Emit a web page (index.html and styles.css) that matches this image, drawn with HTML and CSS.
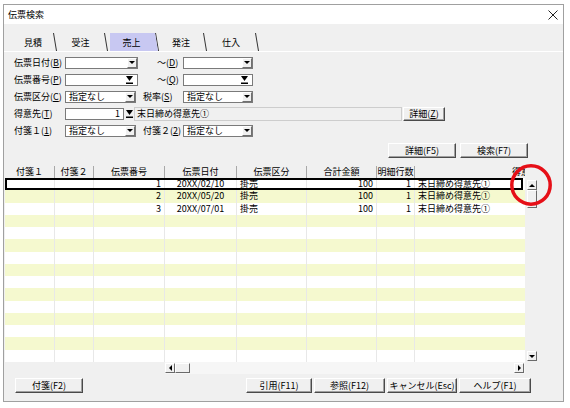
FILE: index.html
```html
<!DOCTYPE html>
<html lang="ja">
<head>
    <meta charset="UTF-8">
    <title>伝票検索</title>
    <link rel="stylesheet" href="styles.css">
</head>
<body>

<div class="window">
    <div class="titlebar">
        <span>伝票検索</span>
        <svg class="close" viewBox="0 0 10 10"><path d="M0.5 0.5L9.5 9.5M9.5 0.5L0.5 9.5" stroke="#222" stroke-width="1"/></svg>
    </div>

    <!-- tab strip -->
    <div class="tabbar">
        <div class="tab w40">見積</div>
        <svg class="sep" viewBox="0 0 4 18"><line x1="0.5" y1="0" x2="3.5" y2="18"/></svg>
        <div class="tab w47">受注</div>
        <svg class="sep" viewBox="0 0 4 18"><line x1="0.5" y1="0" x2="3.5" y2="18"/></svg>
        <div class="tab tab-sel w49">売上</div>
        <svg class="sep sep-over" viewBox="0 0 4 18"><line x1="0.5" y1="0" x2="3.5" y2="18"/></svg>
        <div class="tab w44">発注</div>
        <svg class="sep" viewBox="0 0 4 18"><line x1="0.5" y1="0" x2="3.5" y2="18"/></svg>
        <div class="tab w48">仕入</div>
        <svg class="sep" viewBox="0 0 4 18"><line x1="0.5" y1="0" x2="3.5" y2="18"/></svg>
    </div>

    <div class="panel">
        <div class="form">
            <div class="frow">
                <span class="lbl">伝票日付(<u>B</u>)</span>
                <div class="combo w73"><span></span><i class="drop"></i></div>
                <span class="lbl lbl-to">～(<u>D</u>)</span>
                <div class="combo w70"><span></span><i class="drop"></i></div>
            </div>
            <div class="frow">
                <span class="lbl">伝票番号(<u>P</u>)</span>
                <div class="lookup w73">
                    <svg class="pick" viewBox="0 0 7 8"><polygon points="0,0 7,0 3.5,5"/><rect x="0" y="6.5" width="7" height="1.5"/></svg>
                </div>
                <span class="lbl lbl-to">～(<u>Q</u>)</span>
                <div class="lookup w70">
                    <svg class="pick" viewBox="0 0 7 8"><polygon points="0,0 7,0 3.5,5"/><rect x="0" y="6.5" width="7" height="1.5"/></svg>
                </div>
            </div>
            <div class="frow">
                <span class="lbl">伝票区分(<u>C</u>)</span>
                <div class="combo w71"><span>指定なし</span><i class="drop"></i></div>
                <span class="lbl lbl-mid">税率(<u>S</u>)</span>
                <div class="combo w70"><span>指定なし</span><i class="drop"></i></div>
            </div>
            <div class="frow">
                <span class="lbl">得意先(<u>T</u>)</span>
                <div class="input w59">1</div>
                <svg class="pick pick-out" viewBox="0 0 7 8"><polygon points="0,0 7,0 3.5,5"/><rect x="0" y="6.5" width="7" height="1.5"/></svg>
                <div class="namefield">末日締め得意先①</div>
                <button class="btn btn-z">詳細(<u>Z</u>)</button>
            </div>
            <div class="frow">
                <span class="lbl">付箋１(<u>1</u>)</span>
                <div class="combo w71"><span>指定なし</span><i class="drop"></i></div>
                <span class="lbl lbl-mid">付箋２(<u>2</u>)</span>
                <div class="combo w70"><span>指定なし</span><i class="drop"></i></div>
            </div>
        </div>

        <div class="actions">
            <button class="btn w68">詳細(F5)</button>
            <button class="btn w68">検索(F7)</button>
        </div>

        <!-- result list -->
        <div class="grid">
            <div class="grid-main">
                <div class="ghead">
                    <div>付箋１</div><div>付箋２</div><div>伝票番号</div><div>伝票日付</div>
                    <div>伝票区分</div><div>合計金額</div><div>明細行数</div><div>得意先</div>
                </div>
                <div class="gbody">
                    <div class="grow sel">
                        <div></div><div></div><div class="num">1</div><div class="ctr">20XX/02/10</div>
                        <div>掛売</div><div class="num">100</div><div class="num">1</div><div>末日締め得意先①</div>
                    </div>
                    <div class="grow">
                        <div></div><div></div><div class="num">2</div><div class="ctr">20XX/05/20</div>
                        <div>掛売</div><div class="num">100</div><div class="num">1</div><div>末日締め得意先①</div>
                    </div>
                    <div class="grow">
                        <div></div><div></div><div class="num">3</div><div class="ctr">20XX/07/01</div>
                        <div>掛売</div><div class="num">100</div><div class="num">1</div><div>末日締め得意先①</div>
                    </div>
                    <div class="grow"><div></div><div></div><div></div><div></div><div></div><div></div><div></div><div></div></div>
                    <div class="grow"><div></div><div></div><div></div><div></div><div></div><div></div><div></div><div></div></div>
                    <div class="grow"><div></div><div></div><div></div><div></div><div></div><div></div><div></div><div></div></div>
                    <div class="grow"><div></div><div></div><div></div><div></div><div></div><div></div><div></div><div></div></div>
                    <div class="grow"><div></div><div></div><div></div><div></div><div></div><div></div><div></div><div></div></div>
                    <div class="grow"><div></div><div></div><div></div><div></div><div></div><div></div><div></div><div></div></div>
                    <div class="grow"><div></div><div></div><div></div><div></div><div></div><div></div><div></div><div></div></div>
                    <div class="grow"><div></div><div></div><div></div><div></div><div></div><div></div><div></div><div></div></div>
                    <div class="grow"><div></div><div></div><div></div><div></div><div></div><div></div><div></div><div></div></div>
                    <div class="grow"><div></div><div></div><div></div><div></div><div></div><div></div><div></div><div></div></div>
                    <div class="grow"><div></div><div></div><div></div><div></div><div></div><div></div><div></div><div></div></div>
                    <div class="grow"><div></div><div></div><div></div><div></div><div></div><div></div><div></div><div></div></div>
                </div>
            </div>
            <div class="vscroll">
                <div class="vtop">
                    <i class="sbtn up"></i>
                    <i class="sbtn thumb-v"></i>
                </div>
                <i class="sbtn down"></i>
            </div>
        </div>

        <div class="hscroll">
            <i class="sbtn left"></i>
            <i class="sbtn thumb-h"></i>
            <i class="sbtn right"></i>
        </div>

        <div class="footer">
            <button class="btn w68">付箋(F2)</button>
            <button class="btn btn-push w66">引用(F11)</button>
            <button class="btn w71">参照(F12)</button>
            <button class="btn w70">キャンセル(Esc)</button>
            <button class="btn w72">ヘルプ(F1)</button>
        </div>
    </div>

    <!-- annotation -->
    <svg class="mark" viewBox="0 0 42 42"><circle cx="21" cy="21" r="19.2" fill="none" stroke="#e60f17" stroke-width="3.5"/></svg>
</div>

</body>
</html>
```

FILE: styles.css
```css
* {
    box-sizing: border-box;
}

body {
    margin: 0;
    background: #fff;
    font-family: "Noto Sans CJK JP", "Liberation Sans", sans-serif;
    font-size: 9px;
    line-height: 1;
    color: #000;
}

u {
    text-underline-offset: 1px;
}

.window {
    position: relative;
    width: 561px;
    height: 398px;
    margin: 4px 0 0 3px;
    border: 1px solid #a0a0a0;
    background: #f0f0f0;
}

.titlebar {
    height: 19px;
    display: flex;
    align-items: center;
    justify-content: space-between;
    padding: 0 5px 0 4px;
    background: #fff;
}

.close {
    width: 10px;
    height: 10px;
}

/* tabs */
.tabbar {
    height: 28px;
    display: flex;
    align-items: flex-end;
    padding-left: 9px;
    border-bottom: 1px solid #fff;
}

.tab {
    height: 18px;
    display: flex;
    align-items: center;
    justify-content: center;
    flex: none;
}

.tab-sel {
    margin-left: 2px;
    padding-right: 6px;
    background: #c8c8f2;
    clip-path: polygon(0 0, 45px 0, 48px 100%, 0 100%);
}

.sep {
    width: 4px;
    height: 18px;
    flex: none;
    display: block;
    stroke: #333;
    stroke-width: 1;
}

.sep-over {
    margin-left: -4px;
}

/* widths */
.w40 { width: 40px; }
.w44 { width: 44px; }
.w47 { width: 47px; }
.w48 { width: 48px; }
.w49 { width: 49px; }
.w59 { width: 59px; }
.w66 { width: 66px; }
.w68 { width: 68px; }
.w70 { width: 70px; }
.w71 { width: 71px; }
.w72 { width: 72px; }
.w73 { width: 73px; }

/* search form */
.form {
    padding: 2px 0 0 10px;
}

.frow {
    height: 17px;
    display: flex;
    align-items: center;
}

.lbl {
    width: 51px;
    flex: none;
    white-space: nowrap;
}

.lbl-to {
    width: 26px;
    margin-left: 19px;
}

.lbl-mid {
    width: 40px;
    margin-left: 7px;
}

.combo,
.lookup,
.input {
    height: 12px;
    flex: none;
    display: flex;
    align-items: center;
    background: #fff;
    border: 1px solid #7a7a7a;
}

.combo {
    justify-content: space-between;
    padding-left: 3px;
}

.drop {
    width: 10px;
    height: 10px;
    display: flex;
    align-items: center;
    justify-content: center;
    background: #f0f0f0;
    border: 1px solid;
    border-color: #fff #707070 #707070 #fff;
}

.drop::before {
    content: "";
    border-top: 3px solid #000;
    border-left: 3px solid transparent;
    border-right: 3px solid transparent;
}

.lookup {
    justify-content: flex-end;
    padding-right: 4px;
}

.input {
    justify-content: flex-end;
    padding-right: 3px;
}

.pick {
    width: 7px;
    height: 8px;
    flex: none;
    display: block;
    fill: #000;
}

.pick-out {
    margin: 0 1px 0 2px;
}

.namefield {
    width: 268px;
    height: 14px;
    display: flex;
    align-items: center;
    padding-left: 2px;
    border: 1px solid #cdcdcd;
}

/* buttons */
.btn {
    height: 15px;
    flex: none;
    padding: 0;
    font: inherit;
    color: inherit;
    background: #f0f0f0;
    border: 1px solid;
    border-color: #fff #4a4a4a #4a4a4a #fff;
    box-shadow: inset -1px -1px 0 #a0a0a0;
}

.btn-z {
    width: 42px;
    height: 14px;
    margin-left: 1px;
}

.actions {
    height: 15px;
    margin-top: 4px;
    display: flex;
    justify-content: flex-end;
    gap: 4px;
    padding-right: 35px;
}

/* grid */
.grid {
    display: flex;
    margin: 8px 0 0 1px;
}

.grid-main {
    width: 520px;
    overflow: hidden;
}

.ghead,
.grow {
    display: grid;
    grid-template-columns: 50px 39px 71px 72px 70px 70px 38px 222px;
    width: 632px;
}

.ghead {
    height: 12px;
}

.ghead div {
    line-height: 12px;
    text-align: center;
    white-space: nowrap;
    border-right: 1px solid #a8a8a8;
}

.gbody {
    background: #fff;
}

.grow {
    height: 12.25px;
    background: #fff;
}

.grow:nth-child(even) {
    background: #f5f9cf;
}

.grow div {
    line-height: 12px;
    padding: 0 3px;
    white-space: nowrap;
    overflow: hidden;
    border-right: 1px solid #e8e8e8;
}

.grow .num {
    text-align: right;
}

.grow .ctr {
    text-align: center;
}

.grow.sel {
    width: 518px;
    overflow: hidden;
    outline: 2px solid #000;
    outline-offset: -2px;
}

/* scrollbars */
.sbtn {
    width: 10px;
    height: 10px;
    flex: none;
    display: flex;
    align-items: center;
    justify-content: center;
    background: #f0f0f0;
    border: 1px solid;
    border-color: #fff #6a6a6a #6a6a6a #fff;
}

.sbtn.up::before {
    content: "";
    border-bottom: 3px solid #000;
    border-left: 3px solid transparent;
    border-right: 3px solid transparent;
}

.sbtn.down::before {
    content: "";
    border-top: 3px solid #000;
    border-left: 3px solid transparent;
    border-right: 3px solid transparent;
}

.sbtn.left::before {
    content: "";
    border-right: 3px solid #000;
    border-top: 3px solid transparent;
    border-bottom: 3px solid transparent;
}

.sbtn.right::before {
    content: "";
    border-left: 3px solid #000;
    border-top: 3px solid transparent;
    border-bottom: 3px solid transparent;
}

.vscroll {
    width: 13px;
    height: 184px;
    margin-top: 12px;
    padding: 2px 0 1px 2px;
    display: flex;
    flex-direction: column;
    justify-content: space-between;
}

.thumb-v {
    height: 18px;
}

.hscroll {
    width: 360px;
    height: 12px;
    margin-left: 161px;
    display: flex;
    align-items: center;
    background: #f6f6f6;
}

.thumb-h {
    width: 15px;
}

.hscroll .right {
    margin-left: auto;
    margin-right: 1px;
}

.footer {
    margin-top: 4px;
    display: flex;
    gap: 2px;
    padding: 0 32px 0 11px;
}

.btn-push {
    margin-left: auto;
}

.mark {
    position: absolute;
    left: 506px;
    top: 159px;
    width: 42px;
    height: 42px;
}
```
